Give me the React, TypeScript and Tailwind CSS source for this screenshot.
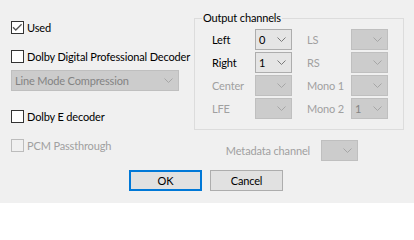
import React from "react";

const FONT = "font-['Lato','Noto_Sans',sans-serif]";

function Chevron({ color }: { color: string }) {
  return (
    <svg width="9" height="5" viewBox="0 0 9 5" className="shrink-0">
      <path d="M0.5 0.5 L4.5 4.5 L8.5 0.5" fill="none" stroke={color} strokeWidth="1" />
    </svg>
  );
}

function Combo({
  value,
  enabled = false,
  className = "",
}: {
  value?: string;
  enabled?: boolean;
  className?: string;
}) {
  return (
    <div
      className={
        "h-[21px] flex items-center justify-between pl-[3px] pr-[5px] border shrink-0 " +
        (enabled
          ? "bg-[#e5e5e5] border-[#adadad] text-black"
          : "bg-[#cccccc] border-[#bfbfbf] text-[#838383]") +
        " " +
        className
      }
    >
      <span className="leading-[16px] whitespace-nowrap">{value ?? ""}</span>
      <Chevron color={enabled ? "#7a7a7a" : "#a6a6a6"} />
    </div>
  );
}

function Check({
  label,
  checked = false,
  disabled = false,
  className = "",
}: {
  label: string;
  checked?: boolean;
  disabled?: boolean;
  className?: string;
}) {
  return (
    <div className={"flex items-center h-[13px] " + className}>
      <div
        className={
          "w-[13px] h-[13px] border shrink-0 " +
          (disabled ? "border-[#bcbcbc] bg-[#f0f0f0]" : "border-[#333333] bg-white")
        }
      >
        {checked && (
          <svg width="11" height="11" viewBox="0 0 11 11">
            <path d="M1 5.2 L3.8 8 L9.6 2.2" fill="none" stroke="#555555" strokeWidth="1.3" />
          </svg>
        )}
      </div>
      <span
        className={
          "ml-[3px] leading-[16px] whitespace-nowrap " +
          (disabled ? "text-[#a0a0a0]" : "text-black")
        }
      >
        {label}
      </span>
    </div>
  );
}

function ChanRow({
  l1,
  v1,
  e1 = false,
  l2,
  v2,
}: {
  l1: string;
  v1?: string;
  e1?: boolean;
  l2: string;
  v2?: string;
}) {
  return (
    <div className="flex items-center h-[21px]">
      <span className={"w-[43px] leading-[16px] " + (e1 ? "text-black" : "text-[#a0a0a0]")}>{l1}</span>
      <Combo className="w-[37px]" value={v1} enabled={e1} />
      <span className="ml-[15px] w-[44px] leading-[16px] text-[#a0a0a0]">{l2}</span>
      <Combo className="w-[37px]" value={v2} />
    </div>
  );
}

export default function App() {
  return (
    <div
      className={
        "w-[414px] h-[203px] overflow-hidden bg-[#f0f0f0] text-[11px] tracking-[-0.15px] flex flex-col " + FONT
      }
    >
      <div className="flex h-[130px] shrink-0">
        <div className="flex-1 min-w-0 pl-[11px] pt-[21px] flex flex-col">
          <Check label="Used" checked />
          <Check className="mt-[16px]" label="Dolby Digital Professional Decoder" />
          <Combo className="mt-[7px] w-[168px]" value="Line Mode Compression" />
          <Check className="mt-[19px]" label="Dolby E decoder" />
        </div>
        <div className="relative shrink-0 mr-[10px] mt-[18px] w-[210px] h-[112px] border border-[#dcdcdc] pt-[10px] pl-[17px] flex flex-col gap-[2px]">
          <span className="absolute left-[7px] top-[-9px] px-[1px] bg-[#f0f0f0] leading-[16px] text-black whitespace-nowrap">
            Output channels
          </span>
          <ChanRow l1="Left" v1="0" e1 l2="LS" />
          <ChanRow l1="Right" v1="1" e1 l2="RS" />
          <ChanRow l1="Center" l2="Mono 1" />
          <ChanRow l1="LFE" l2="Mono 2" v2="1" />
        </div>
      </div>
      <div className="flex items-start h-[31px] shrink-0">
        <Check className="ml-[11px] mt-[9px]" label="PCM Passthrough" disabled />
        <div className="ml-auto mr-[56px] mt-[10px] flex items-center">
          <span className="mr-[11px] leading-[16px] text-[#a0a0a0] whitespace-nowrap">Metadata channel</span>
          <Combo className="w-[37px]" />
        </div>
      </div>
      <div className="mt-[9px] pl-[129px] flex gap-[8px]">
        <button className="w-[73px] h-[21px] border-2 border-[#0078d7] bg-[#e1e1e1] text-black leading-[16px]">
          OK
        </button>
        <button className="w-[73px] h-[21px] border border-[#adadad] bg-[#e1e1e1] text-black leading-[16px]">
          Cancel
        </button>
      </div>
    </div>
  );
}
